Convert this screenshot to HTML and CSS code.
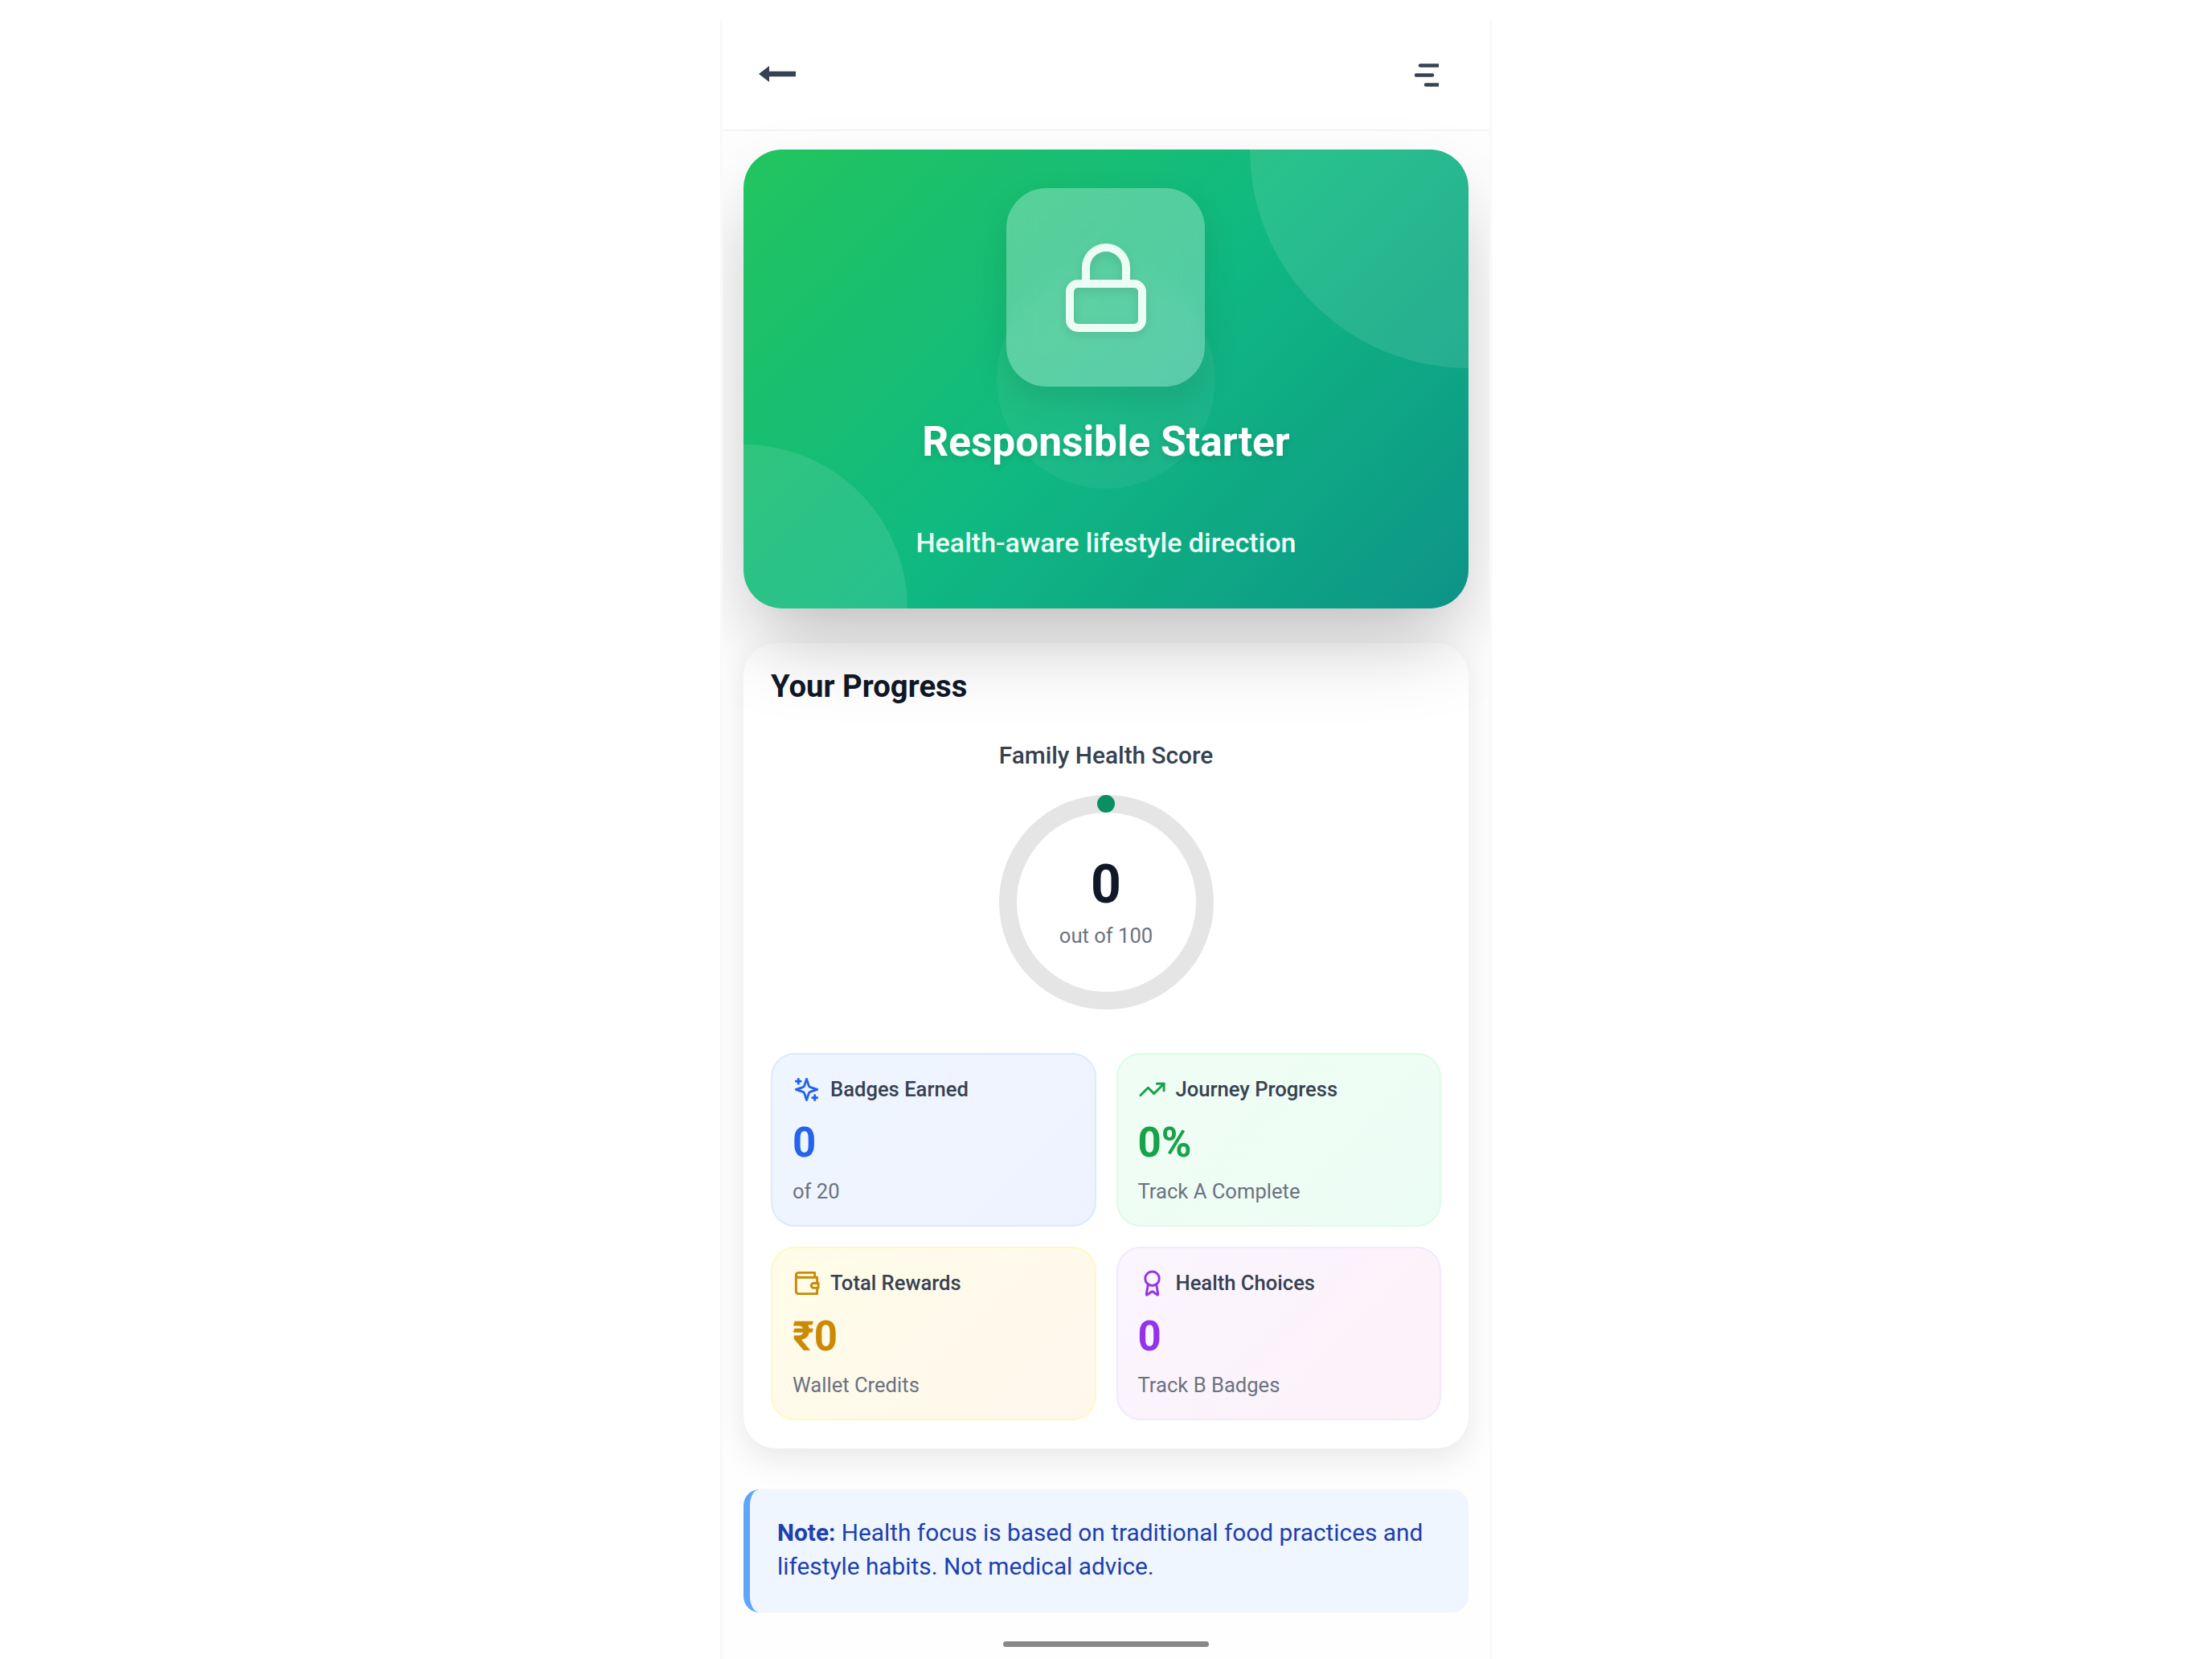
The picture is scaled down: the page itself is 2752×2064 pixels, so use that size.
FILE: index.html
```html
<!DOCTYPE html>
<html lang="en">
<head>
<meta charset="utf-8">
<title>Responsible Starter</title>
<link rel="stylesheet" href="styles.css">
</head>
<body>
<div class="phone">
  <header class="topbar">
    <svg class="back" viewBox="0 0 46 20" width="46" height="20"><path d="M0 10 13 0V6.7H46V13.3H13V20Z"/></svg>
    <svg class="menu" viewBox="0 0 30 30" width="30" height="30"><path d="M7 3.5H30M2 15.5H22M14 27.5H30"/></svg>
  </header>
  <main class="content">
    <section class="hero">
      <span class="blob blob-tr"></span>
      <span class="blob blob-bl"></span>
      <span class="blob blob-c"></span>
      <div class="tile">
        <svg class="lock" viewBox="0 0 24 24" width="120" height="120"><rect x="3" y="11" width="18" height="11" rx="2" ry="2"/><path d="M7 11V7a5 5 0 0 1 10 0v4"/></svg>
      </div>
      <h1 class="hero-title">Responsible Starter</h1>
      <p class="hero-sub">Health-aware lifestyle direction</p>
    </section>
    <section class="progress">
      <h2 class="progress-title">Your Progress</h2>
      <h3 class="score-title">Family Health Score</h3>
      <div class="ring">
        <span class="ring-dot"></span>
        <div class="ring-num">0</div>
        <div class="ring-sub">out of 100</div>
      </div>
      <div class="stats">
        <div class="stat stat-blue">
          <div class="stat-head">
            <svg class="ico" viewBox="0 0 24 24"><path d="m12 3-1.912 5.813a2 2 0 0 1-1.275 1.275L3 12l5.813 1.912a2 2 0 0 1 1.275 1.275L12 21l1.912-5.813a2 2 0 0 1 1.275-1.275L21 12l-5.813-1.912a2 2 0 0 1-1.275-1.275L12 3Z"/><path d="M5 3v4M19 17v4M3 5h4M17 19h4"/></svg>
            <span class="stat-label">Badges Earned</span>
          </div>
          <div class="stat-value">0</div>
          <div class="stat-sub">of 20</div>
        </div>
        <div class="stat stat-green">
          <div class="stat-head">
            <svg class="ico" viewBox="0 0 24 24"><polyline points="22 7 13.5 15.5 8.5 10.5 2 17"/><polyline points="16 7 22 7 22 13"/></svg>
            <span class="stat-label">Journey Progress</span>
          </div>
          <div class="stat-value">0%</div>
          <div class="stat-sub">Track A Complete</div>
        </div>
        <div class="stat stat-yellow">
          <div class="stat-head">
            <svg class="ico" viewBox="0 0 24 24"><path d="M21 12V7H5a2 2 0 0 1 0-4h14v4"/><path d="M3 5v14a2 2 0 0 0 2 2h16v-5"/><path d="M18 12a2 2 0 0 0 0 4h4v-4Z"/></svg>
            <span class="stat-label">Total Rewards</span>
          </div>
          <div class="stat-value">₹0</div>
          <div class="stat-sub">Wallet Credits</div>
        </div>
        <div class="stat stat-purple">
          <div class="stat-head">
            <svg class="ico" viewBox="0 0 24 24"><path d="m15.477 12.89 1.515 8.526a.5.5 0 0 1-.81.47l-3.58-2.687a1 1 0 0 0-1.197 0l-3.586 2.686a.5.5 0 0 1-.81-.469l1.514-8.526"/><circle cx="12" cy="8" r="6"/></svg>
            <span class="stat-label">Health Choices</span>
          </div>
          <div class="stat-value">0</div>
          <div class="stat-sub">Track B Badges</div>
        </div>
      </div>
    </section>
    <aside class="note"><strong>Note:</strong> Health focus is based on traditional food practices and lifestyle habits. Not medical advice.</aside>
    <div class="home-bar"></div>
  </main>
</div>
</body>
</html>
```

FILE: styles.css
```css
* { box-sizing: border-box; }
html, body { margin: 0; height: 2064px; overflow: hidden; background: #fff; }
body { font-family: Roboto, "Liberation Sans", sans-serif; padding-top: 25px; }

.phone {
  width: 954px;
  height: 2039px;
  margin: 0 auto;
  background: #fefefe;
  box-shadow: 0 0 1px 3px rgba(0, 0, 0, .025);
  clip-path: inset(0 -8px -8px -8px);
  overflow: hidden;
}

.topbar {
  height: 138px;
  padding: 0 63px 0 45px;
  background: #fff;
  border-bottom: 2px solid #f5f5f5;
  display: flex;
  align-items: center;
  justify-content: space-between;
}
.back { fill: #374151; display: block; margin-top: -2px; }
.menu { fill: none; stroke: #374151; stroke-width: 4.6; stroke-linecap: round; display: block; margin-top: -1px; }

.content {
  padding: 23px 26px 0;
  display: flex;
  flex-direction: column;
}

.hero {
  position: relative;
  z-index: 1;
  height: 571px;
  border-radius: 48px;
  padding-top: 48px;
  background: linear-gradient(135deg, #22c55e 0%, #10b981 50%, #0d9488 100%);
  box-shadow: 0 50px 100px -14px rgba(0, 0, 0, .26);
  display: flex;
  flex-direction: column;
  align-items: center;
  color: #fff;
}
.blob { position: absolute; background: rgba(255, 255, 255, .1); }
.blob-tr { width: 272px; height: 272px; top: 0; right: 0; border-radius: 0 48px 0 272px; }
.blob-bl { width: 204px; height: 204px; left: 0; bottom: 0; border-radius: 0 204px 0 48px; }
.blob-c { width: 272px; height: 272px; top: 150px; left: 315px; border-radius: 50%; background: rgba(255, 255, 255, .05); }

.tile {
  position: relative;
  width: 247px;
  height: 247px;
  margin-left: -1px;
  border-radius: 50px;
  background: rgba(255, 255, 255, .28);
  backdrop-filter: blur(16px);
  box-shadow: 0 16px 44px rgba(0, 0, 0, .1);
  display: flex;
  align-items: center;
  justify-content: center;
}
.lock {
  fill: none;
  stroke: #ecfdf5;
  stroke-width: 2;
  stroke-linecap: round;
  stroke-linejoin: round;
  filter: drop-shadow(0 4px 6px rgba(0, 0, 0, .1));
}
.hero-title {
  position: relative;
  margin: 37px 0 0;
  font-size: 51.4px;
  line-height: 64px;
  font-weight: 700;
  color: #fff;
  text-shadow: 0 3px 8px rgba(0, 0, 0, .12);
}
.hero-sub {
  position: relative;
  margin: 69px 0 0;
  font-size: 34px;
  line-height: 48px;
  font-weight: 500;
  color: #ecfdf5;
}

.progress {
  margin-top: 43px;
  height: 1002px;
  padding: 26px 34px 0;
  background: #fff;
  border-radius: 40px;
  box-shadow: 0 14px 40px rgba(0, 0, 0, .09);
}
.progress-title {
  margin: 0;
  font-size: 38.3px;
  line-height: 56px;
  font-weight: 700;
  color: #111827;
}
.score-title {
  margin: 37px 0 0;
  font-size: 29.8px;
  line-height: 42px;
  font-weight: 500;
  color: #374151;
  text-align: center;
}
.ring {
  position: relative;
  width: 267px;
  height: 267px;
  margin: 28px auto 0;
  border: 22px solid #e5e5e5;
  border-radius: 50%;
  display: flex;
  flex-direction: column;
  align-items: center;
  padding-top: 55px;
}
.ring-dot {
  position: absolute;
  top: -22px;
  left: 50%;
  width: 22px;
  height: 22px;
  margin-left: -11px;
  border-radius: 50%;
  background: #0a8f62;
}
.ring-num { font-size: 66px; line-height: 70px; font-weight: 700; color: #111827; }
.ring-sub { margin-top: 10px; font-size: 25.6px; line-height: 36px; color: #6b7280; }

.stats {
  margin-top: 54px;
  display: grid;
  grid-template-columns: 1fr 1fr;
  gap: 25px;
}
.stat {
  height: 216px;
  padding: 25px 25px 0;
  border-radius: 30px;
  border: 2px solid;
}
.stat-head { display: flex; align-items: center; gap: 12px; height: 36px; }
.ico {
  width: 35px;
  height: 35px;
  flex: none;
  fill: none;
  stroke: currentColor;
  stroke-width: 2;
  stroke-linecap: round;
  stroke-linejoin: round;
}
.stat-label { font-size: 25.6px; line-height: 36px; font-weight: 500; color: #374151; }
.stat-value { margin-top: 16px; font-size: 51px; line-height: 66px; font-weight: 700; }
.stat-sub { margin-top: 9px; font-size: 25.6px; line-height: 36px; color: #6b7280; }

.stat-blue { background: linear-gradient(135deg, #eff6ff, #eef2ff); border-color: #dbeafe; color: #2563eb; }
.stat-green { background: linear-gradient(135deg, #f0fdf4, #ecfdf5); border-color: #dcfce7; color: #16a34a; }
.stat-yellow { background: linear-gradient(135deg, #fefce8, #fff7ed); border-color: #fef9c3; color: #ca8a04; }
.stat-purple { background: linear-gradient(135deg, #faf5ff, #fdf2f8); border-color: #f3e8ff; color: #9333ea; }

.note {
  margin-top: 51px;
  height: 153px;
  padding: 33px 30px 0 34px;
  background: #eff6ff;
  border-left: 8px solid #60a5fa;
  border-radius: 20px;
  font-size: 29.8px;
  line-height: 42px;
  color: #1e40af;
}
.note strong { font-weight: 700; }

.home-bar {
  width: 256px;
  height: 7px;
  margin: 36px auto 0;
  border-radius: 4px;
  background: #888;
}
```
